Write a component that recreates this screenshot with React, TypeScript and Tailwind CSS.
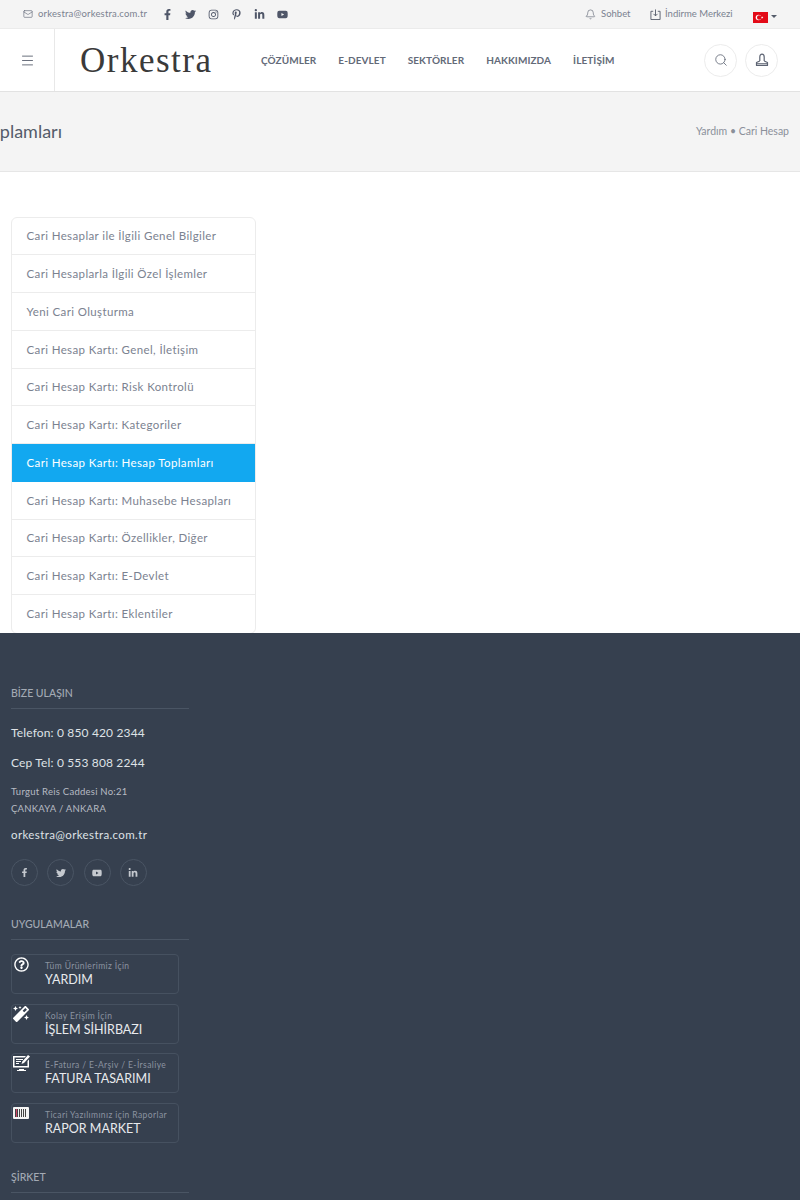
import { Bell, Mail, Menu, Search } from 'lucide-react';
import { FaFacebookF, FaTwitter, FaInstagram, FaPinterestP, FaLinkedinIn, FaYoutube, FaRegQuestionCircle, FaMagic } from 'react-icons/fa';

const nav = ['ÇÖZÜMLER', 'E-DEVLET', 'SEKTÖRLER', 'HAKKIMIZDA', 'İLETİŞİM'];

const menu = [
  'Cari Hesaplar ile İlgili Genel Bilgiler',
  'Cari Hesaplarla İlgili Özel İşlemler',
  'Yeni Cari Oluşturma',
  'Cari Hesap Kartı: Genel, İletişim',
  'Cari Hesap Kartı: Risk Kontrolü',
  'Cari Hesap Kartı: Kategoriler',
  'Cari Hesap Kartı: Hesap Toplamları',
  'Cari Hesap Kartı: Muhasebe Hesapları',
  'Cari Hesap Kartı: Özellikler, Diğer',
  'Cari Hesap Kartı: E-Devlet',
  'Cari Hesap Kartı: Eklentiler',
];

function DownloadBox() {
  return (
    <svg width="11" height="11" viewBox="0 0 12 12" fill="none" stroke="currentColor" strokeWidth="1">
      <path d="M3.5 2.5H1v9h10v-9H8.500M6 .5v7M3.800 5.300 6 7.500l2.200-2.200" />
    </svg>
  );
}

function UserStamp() {
  return (
    <svg width="14" height="14" viewBox="0 0 14 14" fill="none" stroke="currentColor" strokeWidth="1.200" strokeLinejoin="round">
      <path d="M4.800 8V4a2.200 2.900 0 0 1 4.400 0v4" />
      <path d="M4.800 8 1.500 9.500v3h11v-3L9.200 8" />
      <path d="M1.500 10.800h11" />
    </svg>
  );
}

function Flag() {
  return (
    <svg width="15" height="11" viewBox="0 0 15 11">
      <rect width="15" height="11" fill="#e30a17" />
      <circle cx="5.500" cy="5.500" r="2.800" fill="#fff" />
      <circle cx="6.200" cy="5.500" r="2.200" fill="#e30a17" />
      <path d="m9.200 4.300.3.800.9 0-.7.500.3.900-.8-.5-.7.500.2-.9-.7-.5.9 0z" fill="#fff" />
    </svg>
  );
}

function InvoiceIcon() {
  return (
    <svg width="17" height="16" viewBox="0 0 17 16" fill="#fff">
      <path d="M0 1h13l-1.500 1.500H1.500v8.500h13V6L16 4.500V12.500H0z" />
      <path d="M6 14h5v1h2v1H4v-1h2z" />
      <path d="M3 4h7v1H3zM3 6h5v1H3zM3 8h3v1H3z" />
      <path d="M15 0l2 1.500-6 6.500-2.500 1 .8-2.500z" />
    </svg>
  );
}

function BarcodeIcon() {
  return (
    <svg width="16" height="12" viewBox="0 0 16 12">
      <rect width="16" height="12" rx="1" fill="#f4f4f4" />
      <path d="M2 2h1v8H2zM4 2h1v8H4zM6 2h1v8H6zM8 2h1v8H8zM10 2h1v8h-1zM12 2h1v8h-1z" fill="#444" />
      <path d="M3 2h1v8H3z" fill="#c46" />
    </svg>
  );
}

function SectionTitle({ children }: { children: string }) {
  return (
    <div className="border-b border-[#4a5564] pb-[7px] text-[10.500px] leading-[16px] font-medium text-[#a3aab4]">
      {children}
    </div>
  );
}

function AppCard({ icon, small, big }: { icon: React.ReactNode; small: string; big: string }) {
  return (
    <div className="relative h-[40px] w-[168px] rounded-[4px] border border-[#465160] pl-[33px] pt-[5px]">
      <div className="absolute -left-px -top-px flex h-[20px] w-[20px] items-center justify-center text-white">{icon}</div>
      <div className="text-[8.500px] leading-[12px] tracking-[0.4px] text-[#8b93a0] whitespace-nowrap">{small}</div>
      <div className="text-[12.500px] leading-[16px] text-[#e8eaed] whitespace-nowrap">{big}</div>
    </div>
  );
}

export default function App() {
  return (
    <div className="h-[1200px] w-[800px] overflow-hidden bg-white font-['Lato','Open_Sans',sans-serif]">
      <div className="flex h-[29px] items-center border-b border-[#ebebeb] bg-[#f4f4f4] pl-[23px] pr-[23px] text-[9.500px] text-[#7b8290]">
        <Mail size={10} strokeWidth={1.500} className="text-[#5d6473]" />
        <span className="ml-[5px] w-[109px] whitespace-nowrap tracking-[0.17px]">orkestra@orkestra.com.tr</span>
        <div className="ml-[15px] flex items-center gap-[12px] text-[#4f5668]">
          <FaFacebookF size={11} />
          <FaTwitter size={11} />
          <FaInstagram size={11} />
          <FaPinterestP size={11} />
          <FaLinkedinIn size={11} />
          <FaYoutube size={11} />
        </div>
        <div className="ml-auto flex items-center">
          <Bell size={11} strokeWidth={1.300} className="text-[#555c6a]" />
          <span className="ml-[5px] w-[30px] whitespace-nowrap">Sohbet</span>
          <span className="ml-[19px] text-[#555c6a]"><DownloadBox /></span>
          <span className="ml-[4px] w-[68px] whitespace-nowrap">İndirme Merkezi</span>
          <span className="ml-[20px] mt-[6px]"><Flag /></span>
          <span className="ml-[3px] mt-[4px] border-x-[3px] border-t-[3px] border-x-transparent border-t-[#555c6a]" />
        </div>
      </div>

      <div className="flex h-[63px] items-center border-b border-[#e2e2e2] bg-white">
        <div className="flex h-full w-[55px] items-center justify-center border-r border-[#e8e8e8] text-[#555c6a]">
          <Menu size={15} strokeWidth={1.400} />
        </div>
        <div className="ml-[25px] w-[181px] whitespace-nowrap font-['Liberation_Serif',serif] text-[35px] leading-none tracking-[1.500px] text-[#3a3a3a]">
          Orkestra
        </div>
        <div className="mt-px flex gap-[22px] text-[10px] font-bold tracking-[0.08px] text-[#636a78]">
          {nav.map((item) => (
            <span key={item} className="whitespace-nowrap">{item}</span>
          ))}
        </div>
        <div className="ml-auto mr-[22px] flex gap-[8px] text-[#5d6473]">
          <div className="flex h-[33px] w-[33px] items-center justify-center rounded-full border border-[#ececec]">
            <Search size={14} strokeWidth={1.400} />
          </div>
          <div className="flex h-[33px] w-[33px] items-center justify-center rounded-full border border-[#ececec]">
            <UserStamp />
          </div>
        </div>
      </div>

      <div className="flex h-[80px] items-center justify-between border-b border-[#e6e6e6] bg-[#f4f4f4] pr-[11px]">
        <div className="flex w-[62px] justify-end overflow-hidden">
          <h1 className="whitespace-nowrap text-[18px] text-[#555c6a]">Cari Hesap Kartı: Hesap Toplamları</h1>
        </div>
        <div className="text-[10.500px] text-[#8b909a]">Yardım • Cari Hesap</div>
      </div>

      <div className="h-[461px] pl-[11px] pt-[44.750px]">
        <div className="w-[245px] overflow-hidden rounded-[6px] border border-[#ececec]">
          {menu.map((item, i) => (
            <div
              key={item}
              className={
                i === 6
                  ? 'flex h-[37.720px] items-center bg-[#12a8f0] pl-[14.500px] text-[11.500px] tracking-[0.38px] text-white'
                  : 'flex h-[37.720px] items-center border-b border-[#ececec] pl-[14.500px] text-[11.500px] tracking-[0.38px] text-[#7b8290] last:border-b-0'
              }
            >
              {item}
            </div>
          ))}
        </div>
      </div>

      <div className="h-[567px] bg-[#36404f] pl-[11px] pt-[52px]">
        <div className="w-[178px]">
          <SectionTitle>BİZE ULAŞIN</SectionTitle>
        </div>
        <div className="mt-[15px] text-[12px] leading-[18px] tracking-[0.15px] text-[#dfe2e6]">Telefon: 0 850 420 2344</div>
        <div className="mt-[11.500px] text-[12px] leading-[18px] tracking-[0.15px] text-[#dfe2e6]">Cep Tel: 0 553 808 2244</div>
        <div className="mt-[11.500px] text-[9.500px] leading-[17px] tracking-[0.25px] text-[#b6bbc3]">
          Turgut Reis Caddesi No:21
          <br />
          ÇANKAYA / ANKARA
        </div>
        <div className="mt-[9px] text-[11.500px] leading-[18px] tracking-[0.38px] text-[#dfe2e6]">orkestra@orkestra.com.tr</div>
        <div className="mt-[15px] flex gap-[9.300px] text-[#c5c9cf]">
          {[<FaFacebookF size={9} />, <FaTwitter size={10} />, <FaYoutube size={10} />, <FaLinkedinIn size={10} />].map((icon, i) => (
            <div key={i} className="flex h-[27px] w-[27px] items-center justify-center rounded-full border border-[#4a5564]">
              {icon}
            </div>
          ))}
        </div>

        <div className="mt-[30px] w-[178px]">
          <SectionTitle>UYGULAMALAR</SectionTitle>
        </div>
        <div className="mt-[14px] flex flex-col gap-[9.500px]">
          <AppCard icon={<FaRegQuestionCircle size={15} />} small="Tüm Ürünlerimiz İçin" big="YARDIM" />
          <AppCard icon={<FaMagic size={16} />} small="Kolay Erişim İçin" big="İŞLEM SİHİRBAZI" />
          <AppCard icon={<InvoiceIcon />} small="E-Fatura / E-Arşiv / E-İrsaliye" big="FATURA TASARIMI" />
          <AppCard icon={<BarcodeIcon />} small="Ticari Yazılımınız için Raporlar" big="RAPOR MARKET" />
        </div>

        <div className="mt-[26px] w-[178px]">
          <SectionTitle>ŞİRKET</SectionTitle>
        </div>
      </div>
    </div>
  );
}
